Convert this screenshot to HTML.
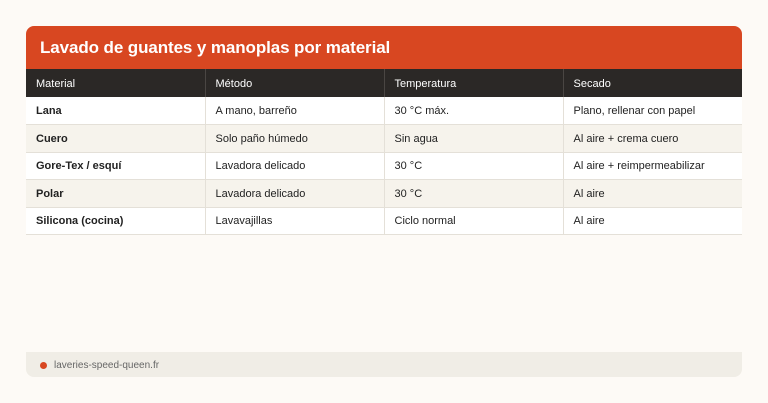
<!DOCTYPE html>
<html><head><meta charset="utf-8"><style>
*{margin:0;padding:0;box-sizing:border-box}
body{width:768px;height:403px;background:#fdfaf6;font-family:"Liberation Sans",sans-serif;position:relative;overflow:hidden}
.title{position:absolute;left:26px;top:26px;width:716px;height:43px;background:#d84721;border-radius:8px 8px 0 0;color:#fff;font-weight:bold;font-size:17px;padding:12px 0 0 14px;letter-spacing:-0.1px}
table{position:absolute;left:26px;top:69px;width:716px;border-collapse:collapse;font-size:11px;color:#222}
td,th{width:179px;text-align:left;padding:1px 10px 0;height:27.5px;border-right:1px solid #e4e0d8;border-bottom:1px solid #e4e0d8}
th{background:#2b2826;color:#fff;font-weight:normal;height:28px;border-right:1px solid #4a4643;border-bottom:none}
td:last-child,th:last-child{border-right:none}
tr:nth-child(odd) td{background:#f6f3ec}
tr:nth-child(even) td{background:#fff}
td:first-child{font-weight:bold}
.foot{position:absolute;left:26px;top:352px;width:716px;height:25px;background:#f0ede6;border-radius:0 0 8px 8px;font-size:10px;color:#666;padding:8px 0 0 28px}
.foot:before{content:"";position:absolute;left:14px;top:10px;width:7px;height:7px;border-radius:50%;background:#d84721}
</style></head><body>
<div class="title">Lavado de guantes y manoplas por material</div>
<table>
<tr><th>Material</th><th>Método</th><th>Temperatura</th><th>Secado</th></tr>
<tr><td>Lana</td><td>A mano, barreño</td><td>30 °C máx.</td><td>Plano, rellenar con papel</td></tr>
<tr><td>Cuero</td><td>Solo paño húmedo</td><td>Sin agua</td><td>Al aire + crema cuero</td></tr>
<tr><td>Gore-Tex / esquí</td><td>Lavadora delicado</td><td>30 °C</td><td>Al aire + reimpermeabilizar</td></tr>
<tr><td>Polar</td><td>Lavadora delicado</td><td>30 °C</td><td>Al aire</td></tr>
<tr><td>Silicona (cocina)</td><td>Lavavajillas</td><td>Ciclo normal</td><td>Al aire</td></tr>
</table>
<div class="foot">laveries-speed-queen.fr</div>
</body></html>
